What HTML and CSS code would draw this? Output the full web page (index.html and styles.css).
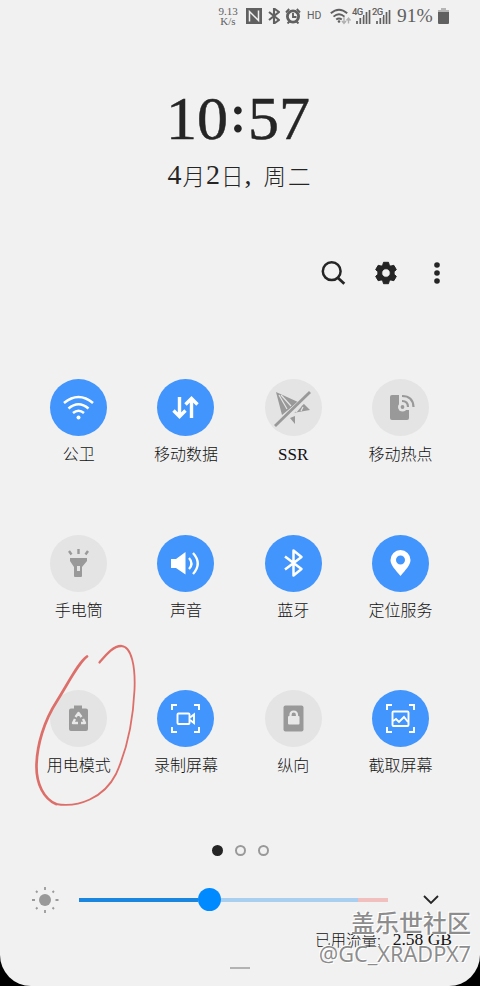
FILE: index.html
```html
<!DOCTYPE html>
<html lang="zh-CN">
<head>
<meta charset="utf-8">
<title>快捷设置</title>
<link rel="stylesheet" href="styles.css">
</head>
<body>
<main class="panel">
  <header class="status">
    <div class="speed"><span>9.13</span><span>K/s</span></div>
    <svg class="nfc" width="16" height="16" viewBox="0 0 16 16"><path fill="#606060" d="M0 0h16v16H0z"/><path d="M3.500 13.500V3.500l9 9V2.500" fill="none" stroke="#f1f1f1" stroke-width="1.500"/></svg>
    <svg class="bt" width="12" height="16" viewBox="0 0 12 16"><path d="M1 4l10 8-5 3.500V.5L11 4 1 12" fill="none" stroke="#606060" stroke-width="2.100"/></svg>
    <svg class="alarm" width="16" height="16" viewBox="0 0 16 16"><circle cx="8" cy="8.500" r="5.600" fill="none" stroke="#606060" stroke-width="2.800"/><path d="M8 5v4h3.500M1 4.500L4.200 1M15 4.500L11.800 1M2.500 15.500l2-2M13.500 15.500l-2-2" fill="none" stroke="#606060" stroke-width="1.900"/></svg>
    <span class="hd">HD</span>
    <svg class="wf" width="22" height="17" viewBox="0 0 22 17"><g fill="none" stroke="#606060" stroke-width="1.900"><path d="M.8 5.300Q9 -2 17.200 5.300M3.500 8.600q5.500-4.700 11 0M6.200 11.500q2.800-2.200 5.600 0"/></g><circle cx="9" cy="13.500" r="1.300" fill="#606060"/><path d="M14 9v6m-2-2l2 2.500 2-2.500M18.500 15.500v-5m-2 2l2-2.500 2 2.500" fill="none" stroke="#b0b0b0" stroke-width="1.400"/></svg>
    <div class="signal"><span>4G</span><svg width="19" height="15" viewBox="0 0 19 15"><path d="M5 15v-3M8.300 15V9M11.600 15V6M14.500 15V3M17.500 15V1" stroke="#606060" stroke-width="1.700"/></svg></div>
    <div class="signal"><span>2G</span><svg width="19" height="15" viewBox="0 0 19 15"><path d="M5 15v-3M8.300 15V9M11.600 15V6M14.500 15V3M17.500 15V1" stroke="#606060" stroke-width="1.700"/></svg></div>
    <span class="percent">91%</span>
    <svg class="batt" width="11" height="16" viewBox="0 0 11 16"><path d="M3 0h5v2h3v2H0V2h3z" fill="#b5b5b5"/><path d="M0 4h11v11q0 1-1 1H1q-1 0-1-1z" fill="#606060"/></svg>
  </header>

  <section class="clock">
    <div class="time"><span>10</span><span class="colon">:</span><span>57</span></div>
    <div class="date"><b>4</b>月<b>2</b>日<b class="comma">,</b><span class="week">周二</span></div>
  </section>

  <nav class="tools">
    <svg width="26" height="26" viewBox="0 0 26 26"><circle cx="10.700" cy="11.200" r="8.900" fill="none" stroke="#252525" stroke-width="2.500"/><path d="M16.500 17.500l6.800 6.300" stroke="#252525" stroke-width="2.800"/></svg>
    <svg width="24" height="24" viewBox="0 0 24 24"><path fill="#252525" stroke="#252525" stroke-width="1" stroke-linejoin="round" fill-rule="evenodd" d="M9.500 1.300h5l.8 3 1.500.8 3-.8 2.500 4.300-2.200 2.200v2.400l2.200 2.200-2.500 4.300-3-.8-1.500.8-.8 3h-5l-.8-3-1.500-.8-3 .8-2.500-4.300 2.200-2.200v-2.400L1.700 8.600l2.500-4.300 3 .8 1.500-.8zM12 7.700a4.300 4.300 0 1 0 0 8.600 4.300 4.300 0 0 0 0-8.600z"/></svg>
    <svg width="8" height="24" viewBox="0 0 8 24" fill="#252525"><circle cx="4" cy="4" r="2.800"/><circle cx="4" cy="12" r="2.800"/><circle cx="4" cy="20" r="2.800"/></svg>
  </nav>

  <section class="grid">
    <div class="tile on"><div class="disc"><svg viewBox="0 0 57 57"><path d="M14 24q14.500-12 29 0M18.500 29.500q10-8.500 20 0M23 34q5.500-4.500 11 0" fill="none" stroke="#fff" stroke-width="2.600"/><circle cx="28.500" cy="38.500" r="2" fill="#fff"/></svg></div><span>公卫</span></div>
    <div class="tile on"><div class="disc"><svg viewBox="0 0 57 57"><path d="M22.500 18v19m-6-5.500l6 6 6-6M34.500 39V20m-6 5.500l6-6 6 6" fill="none" stroke="#fff" stroke-width="3.400"/></svg></div><span>移动数据</span></div>
    <div class="tile"><div class="disc"><svg viewBox="0 0 57 57"><path fill="#999" d="M11 13l22 10-16 13zM37 23l8 8-17 3zM25 39l5-2v8z"/><path d="M14 16l8 14M16 16l10 11M31 33l5-6M36 32l2-4" stroke="#e4e4e4" stroke-width="1.200"/><path d="M9 49L46 14" stroke="#e4e4e4" stroke-width="6"/><path d="M10 47L45 13" stroke="#999" stroke-width="2.800"/></svg></div><span class="latin">SSR</span></div>
    <div class="tile"><div class="disc"><svg viewBox="0 0 57 57"><rect x="18" y="16" width="19" height="25" rx="2" fill="#999"/><path fill="#e4e4e4" d="M27 14h17v17H31a5 5 0 0 1-4-5z"/><circle cx="30.500" cy="28" r="4.500" fill="#e4e4e4"/><circle cx="30.500" cy="28" r="1.900" fill="#999"/><path d="M30 22q6 0 6 6M30 17q11 0 11.500 11" fill="none" stroke="#999" stroke-width="2.200"/></svg></div><span>移动热点</span></div>

    <div class="tile"><div class="disc"><svg viewBox="0 0 57 57"><path fill="#999" d="M20 23h17v3l-5 6v9q0 1-1 1h-6q-1 0-1-1v-9l-4-6z"/><path fill="#e4e4e4" d="M27 31h3v5h-3z"/><path d="M28.500 14v5M19 16l2.500 3.500M38 16l-2.500 3.500" stroke="#999" stroke-width="2.400"/></svg></div><span>手电筒</span></div>
    <div class="tile on"><div class="disc"><svg viewBox="0 0 57 57"><path fill="#fff" d="M14 24h5l9.500-7v22.500L19 33h-5z"/><path d="M32 23q5 5.500 0 11M36 18q9.500 10.500 0 21" fill="none" stroke="#fff" stroke-width="2.300"/></svg></div><span>声音</span></div>
    <div class="tile on"><div class="disc"><svg viewBox="0 0 57 57"><path d="M20 21.500L36.500 34l-8 6.500v-25l8 6.500L20 34.500" fill="none" stroke="#fff" stroke-width="2.500" stroke-linejoin="round"/></svg></div><span>蓝牙</span></div>
    <div class="tile on"><div class="disc"><svg viewBox="0 0 57 57"><path fill="#fff" fill-rule="evenodd" d="M28.500 15a10 10 0 0 1 10 10c0 5-5 10-10 16-5-6-10-11-10-16a10 10 0 0 1 10-10zm0 5.500a4.500 4.500 0 1 0 0 9 4.500 4.500 0 0 0 0-9z"/></svg></div><span>定位服务</span></div>

    <div class="tile"><div class="disc"><svg viewBox="0 0 57 57"><path fill="#999" d="M24 15.500h8v3h4q2 0 2 2V39q0 2-2 2H21q-2 0-2-2V20.500q0-2 2-2h3z"/><path d="M25.500 27l3-4 3 4M33 29l2 4h-4M28 33h-5l2-4" fill="none" stroke="#e8e8e8" stroke-width="2.400" stroke-linejoin="round"/></svg></div><span>用电模式</span></div>
    <div class="tile on"><div class="disc"><svg viewBox="0 0 57 57" fill="none" stroke="#fff" stroke-width="1.900"><path d="M15 20v-5h5M37 15h5v5M42 37v5h-5M20 42h-5v-5"/><rect x="20.500" y="23.500" width="12" height="10.500" rx="1"/><path d="M33 27.500l4-3V33l-4-3"/></svg></div><span>录制屏幕</span></div>
    <div class="tile"><div class="disc"><svg viewBox="0 0 57 57"><rect x="18.500" y="15.500" width="20" height="26" rx="2" fill="#999"/><rect x="23" y="26" width="11.500" height="8.500" rx="1" fill="#e8e8e8"/><path d="M25.500 27v-2q0-3.500 3.200-3.500T32 25v2" fill="none" stroke="#e8e8e8" stroke-width="2.200"/></svg></div><span>纵向</span></div>
    <div class="tile on"><div class="disc"><svg viewBox="0 0 57 57" fill="none" stroke="#fff" stroke-width="1.900"><path d="M15 20v-5h5M37 15h5v5M42 37v5h-5M20 42h-5v-5"/><rect x="20.500" y="21.500" width="16" height="14.500" rx="1"/><path d="M21 31l3-2 3 3 5-5 4 5"/></svg></div><span>截取屏幕</span></div>
  </section>

  <div class="pages"><i class="current"></i><i></i><i></i></div>

  <section class="brightness">
    <svg class="sun" width="28" height="28" viewBox="0 0 28 28"><circle cx="14" cy="14" r="6" fill="#999"/><path d="M14 1v3M14 24v3M1 14h3M24.500 14h3M5 5l1.500 1.500M21.500 6.500L23 5M5 23l1.500-1.500M21.500 21.500L23 23" stroke="#999" stroke-width="1.800"/></svg>
    <div class="track"><div class="filled"></div><div class="knob"></div><div class="rest"></div><div class="warm"></div></div>
    <svg class="chevron" width="16" height="10" viewBox="0 0 16 10"><path d="M1 1l7 7 7-7" fill="none" stroke="#252525" stroke-width="1.800"/></svg>
  </section>

  <footer class="usage"><span>已用流量:</span><b>2.58 GB</b></footer>
  <div class="handle"></div>
  <div class="watermark"><span class="community">盖乐世社区</span><span class="user">@GC_XRADPX7</span></div>
  <svg class="scribble" width="110" height="170" viewBox="30 640 110 170" fill="none" stroke="#dd6f6a" stroke-linecap="round"><path stroke-width="2.700" d="M87 656.500C79 662 70 680 57 701C44 721 37 745 36.500 765C36 784 44 799 56 804"/><path stroke-width="1.800" d="M56 804C78 808 104 798 116 774C127 750 133 722 134.500 690C135.500 668 132 646 121 646"/><path stroke-width="2.300" d="M121 646C113 646 106 655 99.500 662.500"/></svg>
</main>
</body>
</html>
```
FILE: styles.css
```css
body { margin: 0; background: #000; }
.panel {
  position: relative;
  box-sizing: border-box;
  width: 480px;
  height: 986px;
  overflow: hidden;
  background: #f1f1f1;
  border-radius: 0 0 31px 31px;
  color: #252525;
  font-family: "Liberation Serif", "Noto Sans CJK SC", serif;
}
svg { display: block; flex: none; }
b { font-weight: 400; }

.status { display: flex; height: 32px; padding-left: 218px; align-items: center; color: #606060; }
.speed { display: flex; flex-direction: column; width: 28px; font-size: 11px; line-height: 10px; text-align: center; margin-left: -4px; }
.nfc { margin-left: 4px; }
.bt { margin-left: 6px; }
.alarm { margin-left: 5px; }
.hd { width: 23px; margin-left: 6px; font: 10.5px/16px Roboto, sans-serif; }
.signal { display: flex; position: relative; width: 20px; height: 16px; align-items: flex-end; }
.signal span { position: absolute; left: 0; top: -1px; font: 500 9.5px/10px Roboto, sans-serif; letter-spacing: -.6px; background: #f1f1f1; }
.percent { width: 37px; margin-left: 5px; font-size: 19.5px; line-height: 24px; white-space: nowrap; }
.batt { margin-left: 4px; }

.clock { display: flex; height: 218px; flex-direction: column; align-items: center; padding-top: 50px; box-sizing: border-box; }
.time { display: flex; width: 144px; height: 78px; margin-right: 4px; justify-content: space-between; font-size: 62px; line-height: 72px; white-space: nowrap; -webkit-text-stroke: .5px #252525; }
.colon { font-size: 50px; line-height: 64px; -webkit-text-stroke-width: 1.8px; }
.date { display: flex; height: 30px; align-items: center; gap: 1px; font: 300 22.500px/28px "Noto Sans CJK SC", sans-serif; }
.date b { font: 28px/30px "Liberation Serif", serif; }
.date .comma { width: 18px; }
.week { letter-spacing: 2px; }

.tools { display: flex; height: 46px; padding: 0 39px 0 321px; align-items: center; }
.tools svg + svg { margin-left: 27px; }
.tools svg:last-child { margin-left: 35px; }

.grid { display: grid; grid-template-columns: repeat(4, 107.3px); grid-auto-rows: 155.500px; margin: 83px 0 0 25px; }
.tile { display: flex; flex-direction: column; align-items: center; }
.disc { width: 57px; height: 57px; border-radius: 50%; background: #e4e4e4; }
.on .disc { background: #4295fd; }
.tile span { margin-top: 5px; font: 300 16px/24px "Noto Sans CJK SC", sans-serif; color: #111; white-space: nowrap; }
.tile .latin { margin-top: 7px; font: 17px/24px "Liberation Serif", serif; }

.pages { display: flex; height: 12px; margin-top: -1px; justify-content: center; align-items: center; gap: 12px; }
.pages i { box-sizing: border-box; width: 11px; height: 11px; border: 2px solid #999; border-radius: 50%; }
.pages .current { background: #252525; border-color: #252525; }

.brightness { display: flex; height: 30px; margin-top: 28px; padding-left: 31px; align-items: center; }
.track { display: flex; width: 309px; margin-left: 20px; align-items: center; }
.filled { width: 119px; height: 4px; background: #1a86e0; }
.knob { width: 23px; height: 23px; border-radius: 50%; background: #008aff; }
.rest { width: 137px; height: 4px; background: #a9cff0; }
.warm { width: 30px; height: 4px; background: #f1bfbd; }
.chevron { margin-left: 35px; }

.usage { display: flex; height: 24px; margin: 12px 28px 0 315px; justify-content: space-between; align-items: center; font: 300 15.500px/24px "Noto Sans CJK SC", sans-serif; color: #111; white-space: nowrap; }
.usage b { font: 17.500px/24px "Liberation Serif", serif; }
.handle { width: 20px; height: 2px; margin: 16px auto 0; background: #b3b3b3; }

.watermark { position: absolute; right: 9px; top: 906px; display: flex; flex-direction: column; align-items: flex-end; color: rgba(110, 110, 110, .78); text-shadow: 1px 1px #fff, -1px -1px #fff; white-space: nowrap; }
.community { font: 500 24px/32px "Noto Sans CJK SC", sans-serif; }
.user { margin-top: 2px; font: 21.700px/28px "Noto Sans", sans-serif; }
.scribble { position: absolute; left: 30px; top: 640px; }
```
